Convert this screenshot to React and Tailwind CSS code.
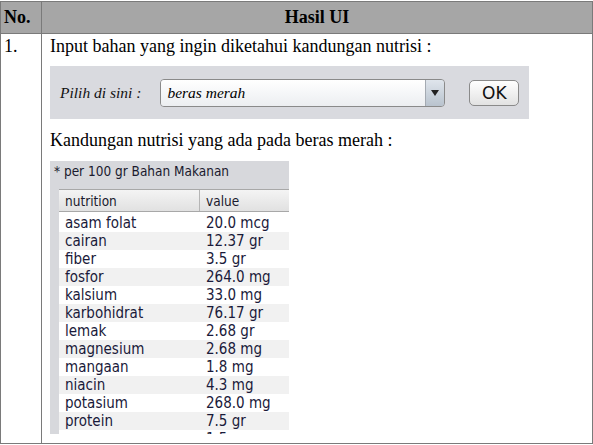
import React from "react";

const rows = [
  ["asam folat", "20.0 mcg"],
  ["cairan", "12.37 gr"],
  ["fiber", "3.5 gr"],
  ["fosfor", "264.0 mg"],
  ["kalsium", "33.0 mg"],
  ["karbohidrat", "76.17 gr"],
  ["lemak", "2.68 gr"],
  ["magnesium", "2.68 mg"],
  ["mangaan", "1.8 mg"],
  ["niacin", "4.3 mg"],
  ["potasium", "268.0 mg"],
  ["protein", "7.5 gr"],
  ["seng", "1.5 mg"],
];

export default function App() {
  const serif = { fontFamily: '"Liberation Serif", "Times New Roman", serif' };
  const tahoma = { fontFamily: '"DejaVu Sans Condensed", "DejaVu Sans", sans-serif' };
  return (
    <div className="w-[593px] h-[445px] bg-white overflow-hidden pt-[1px]" style={serif}>
      <div className="w-[593px] h-[443px] border-[1.5px] border-[#7a7a7a] flex flex-col text-black">
        {/* header */}
        <div className="flex h-[32px] bg-[#a6a6a6] border-b-[1.5px] border-[#7a7a7a] text-[18px] font-bold">
          <div className="w-[41px] border-r-[1.5px] border-[#7a7a7a] flex items-center pl-[3px]">No.</div>
          <div className="flex-1 flex items-center justify-center">Hasil UI</div>
        </div>
        {/* body */}
        <div className="flex flex-1 min-h-0">
          <div className="w-[41px] border-r-[1.5px] border-[#7a7a7a] pl-[3px] pt-[1px] text-[18px] leading-[22px]">1.</div>
          <div className="flex-1 pl-[8px] pt-[1px] text-[18px] leading-[22px] overflow-hidden">
            <div>Input bahan yang ingin diketahui kandungan nutrisi :</div>
            {/* combo panel */}
            <div className="mt-[9px] w-[479px] h-[53px] bg-[#d9dadf] flex items-center pl-[10px]">
              <span className="italic text-[15.5px] mr-[19px] text-[#111]">Pilih di sini :</span>
              <div className="w-[285px] h-[28px] rounded-[4px] border border-[#8a8a8a] flex overflow-hidden shadow-[inset_0_1px_1px_rgba(0,0,0,0.15)]">
                <div className="flex-1 bg-gradient-to-b from-[#ffffff] to-[#eceef1] italic text-[15.5px] pl-[6px] flex items-center">beras merah</div>
                <div className="w-[19px] border-l border-[#a4aab2] bg-gradient-to-b from-[#dfe5ec] to-[#b9c3ce] flex items-center justify-center">
                  <svg width="8" height="6" viewBox="0 0 8 6"><path d="M0 0 L8 0 L4 6 Z" fill="#222" /></svg>
                </div>
              </div>
              <div className="ml-[24px] w-[50px] h-[26px] rounded-[5px] border border-[#8a8a8a] bg-gradient-to-b from-[#ffffff] to-[#e2e2e2] flex items-center justify-center text-[17px] text-[#111]" style={{ fontFamily: '"DejaVu Sans", sans-serif' }}>OK</div>
            </div>
            <div className="mt-[10px]">Kandungan nutrisi yang ada pada beras merah :</div>
            {/* nutrition panel */}
            <div className="mt-[10px] w-[239px] h-[273px] bg-[#d7d8dc] flex flex-col overflow-hidden" style={tahoma}>
              <div className="h-[28px] pl-[4px] pt-[1px] text-[13.5px] leading-[18px] text-[#1a1a2e]">* per 100 gr Bahan Makanan</div>
              <div className="flex-1 ml-[9px] bg-white flex flex-col overflow-hidden">
                <div className="h-[23px] flex bg-gradient-to-b from-[#f4f4f4] to-[#e1e1e1] border-t border-b border-[#a8a8a8] text-[13.5px] text-[#1a1a2e] items-center">
                  <div className="w-[141px] h-full border-r border-[#b5b5b5] pl-[6px] flex items-center">nutrition</div>
                  <div className="flex-1 pl-[6px]">value</div>
                </div>
                <div className="pt-[2px] flex flex-col">
                  {rows.map(([n, v], i) => (
                    <div key={n} className={`h-[18px] flex items-center text-[15px] text-[#1a1a3a] ${i % 2 === 1 ? "bg-[#f1f1f1]" : "bg-white"}`}>
                      <div className="w-[141px] pl-[6px]">{n}</div>
                      <div className="flex-1 pl-[6px]">{v}</div>
                    </div>
                  ))}
                </div>
              </div>
            </div>
          </div>
        </div>
      </div>
    </div>
  );
}
